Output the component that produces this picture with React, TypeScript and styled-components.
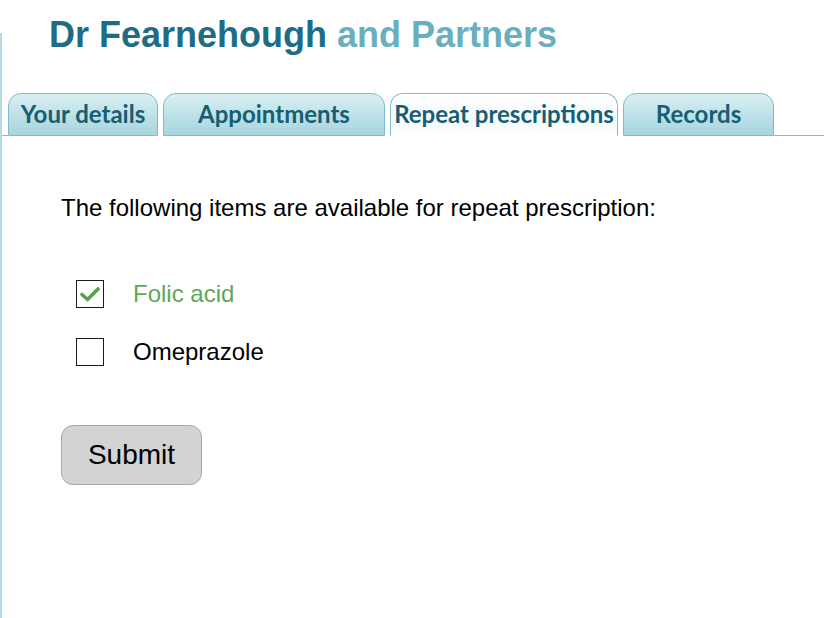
import React, { useState } from "react";
import styled, { createGlobalStyle } from "styled-components";

const GlobalStyle = createGlobalStyle`
  html, body {
    margin: 0;
    padding: 0;
    background: #ffffff;
  }
  body {
    font-family: "Liberation Sans", Arial, sans-serif;
  }
`;

const tabs = ["Your details", "Appointments", "Repeat prescriptions", "Records"];
const tabWidths = [150, 222, 228, 151];

const items = [
  { name: "Folic acid", checked: true },
  { name: "Omeprazole", checked: false },
];

const CheckIcon = () => (
  <svg width="20" height="16" viewBox="0 0 20 16">
    <path
      d="M2 8.5 L7.5 13.5 L18 3"
      fill="none"
      stroke="#5a9e52"
      strokeWidth="3.6"
      strokeLinecap="round"
      strokeLinejoin="round"
    />
  </svg>
);

const App = () => {
  const [active, setActive] = useState(2);
  const [checked, setChecked] = useState(items.map((i) => i.checked));

  const toggle = (idx: number) => {
    setChecked((prev) => prev.map((c, i) => (i === idx ? !c : c)));
  };

  return (
    <PageStyled>
      <GlobalStyle />
      <TitleStyled>
        Dr Fearnehough <TitleLightStyled>and Partners</TitleLightStyled>
      </TitleStyled>
      <TabBarStyled>
        <TabEdgeStyled style={{ width: 8 }} />
        {tabs.map((tab, idx) => (
          <TabStyled
            key={tab}
            $active={idx === active}
            $first={idx === 0}
            style={{ width: tabWidths[idx] }}
            onClick={() => setActive(idx)}
          >
            {tab}
          </TabStyled>
        ))}
        <TabEdgeStyled style={{ flex: 1 }} />
      </TabBarStyled>
      <ContentStyled>
        <IntroStyled>
          The following items are available for repeat prescription:
        </IntroStyled>
        <ListStyled>
          {items.map((item, idx) => (
            <RowStyled key={item.name} onClick={() => toggle(idx)}>
              <BoxStyled>{checked[idx] && <CheckIcon />}</BoxStyled>
              <LabelStyled $checked={checked[idx]}>{item.name}</LabelStyled>
            </RowStyled>
          ))}
        </ListStyled>
        <SubmitStyled>Submit</SubmitStyled>
      </ContentStyled>
    </PageStyled>
  );
};

const PageStyled = styled.div`
  position: relative;
  width: 824px;
  height: 618px;
  display: flex;
  flex-direction: column;
  overflow: hidden;
  &::before {
    content: "";
    position: absolute;
    left: 0;
    top: 33px;
    bottom: 0;
    width: 2px;
    background: #b3dce3;
  }
`;

const TitleStyled = styled.h1`
  margin: 0;
  padding: 13px 0 0 49px;
  height: 80px;
  box-sizing: border-box;
  font-family: "Liberation Sans", Arial, sans-serif;
  font-size: 36px;
  font-weight: bold;
  color: #1e6c86;
  line-height: 44px;
`;

const TitleLightStyled = styled.span`
  color: #6aafbd;
`;

const TabBarStyled = styled.div`
  display: flex;
  align-items: flex-end;
  height: 56px;
  box-sizing: border-box;
  padding-top: 13px;
`;

const TabEdgeStyled = styled.div`
  height: 0;
  border-bottom: 1.5px solid #7fbccb;
`;

const TabStyled = styled.div<{ $active: boolean; $first: boolean }>`
  flex: none;
  margin-left: ${(p) => (p.$first ? "0" : "5px")};
  height: 43px;
  box-sizing: border-box;
  display: flex;
  align-items: center;
  justify-content: center;
  padding-bottom: 2px;
  border: 1.5px solid #7fbccb;
  border-bottom-color: ${(p) => (p.$active ? "#ffffff" : "#7fbccb")};
  border-radius: 13px 13px 0 0;
  background: ${(p) =>
    p.$active
      ? "linear-gradient(#ffffff, #f4fafb 60%, #ffffff)"
      : "linear-gradient(#daeff3, #b9dfe6 60%, #a9d5de)"};
  font-family: Lato, "Open Sans", sans-serif;
  font-weight: bold;
  font-size: 24px;
  color: #165e73;
  white-space: nowrap;
  cursor: pointer;
`;

const ContentStyled = styled.div`
  display: flex;
  flex-direction: column;
  align-items: flex-start;
  padding: 60px 0 0 61px;
`;

const IntroStyled = styled.p`
  margin: 0;
  font-size: 24px;
  line-height: 24px;
  color: #000000;
`;

const ListStyled = styled.div`
  display: flex;
  flex-direction: column;
  gap: 30px;
  margin-top: 60px;
  padding-left: 15px;
`;

const RowStyled = styled.div`
  display: flex;
  align-items: center;
  gap: 29px;
  cursor: pointer;
`;

const BoxStyled = styled.div`
  width: 28px;
  height: 28px;
  box-sizing: border-box;
  border: 1.5px solid #1a1a1a;
  display: flex;
  align-items: center;
  justify-content: center;
  background: #ffffff;
`;

const LabelStyled = styled.span<{ $checked: boolean }>`
  font-size: 24px;
  line-height: 28px;
  color: ${(p) => (p.$checked ? "#5ea85a" : "#000000")};
`;

const SubmitStyled = styled.button`
  margin-top: 59px;
  width: 141px;
  height: 60px;
  border: 1.5px solid #a9a9a9;
  border-radius: 12px;
  background: #d3d3d3;
  font-family: "Liberation Sans", Arial, sans-serif;
  font-size: 28px;
  color: #000000;
  cursor: pointer;
`;

export default App;
